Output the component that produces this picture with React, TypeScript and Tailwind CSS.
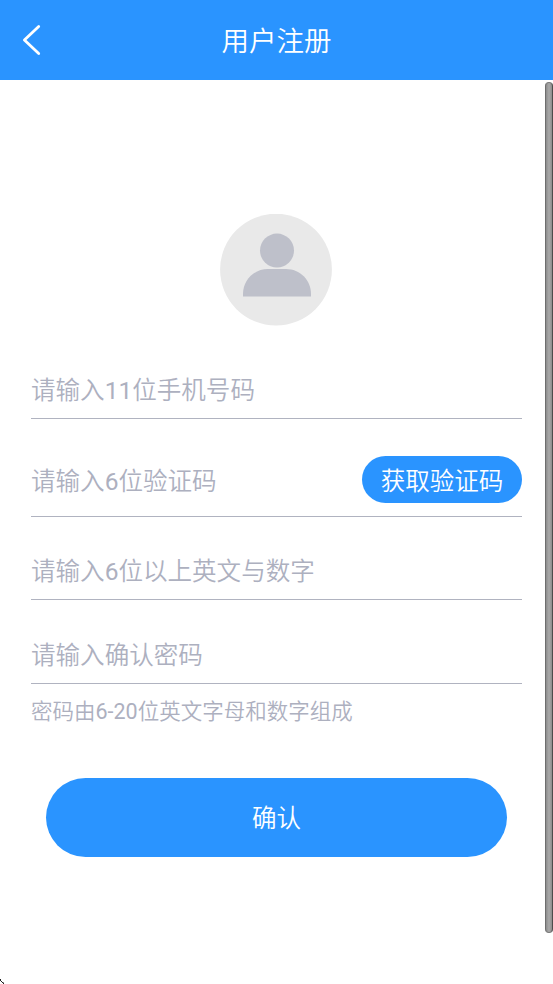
import React from 'react';

const FIELDS = [
  { name: 'phone', type: 'tel', placeholder: '请输入11位手机号码', row: 'h-[59px]', input: 'pt-0.5' },
  { name: 'code', type: 'text', placeholder: '请输入6位验证码', row: 'h-[98px] pb-[13px] pt-[37px]', input: 'pt-[3px]', action: '获取验证码' },
  { name: 'password', type: 'password', placeholder: '请输入6位以上英文与数字', row: 'h-[83px] pt-[26px]', input: 'pt-px' },
  { name: 'confirm', type: 'password', placeholder: '请输入确认密码', row: 'h-[84px] pt-[26px]', input: 'pt-0.5' },
];

const Header: React.FC = () => {
  return (
    <header className="relative flex h-20 items-center justify-center bg-[#2a94ff] text-white">
      <button type="button" aria-label="返回" className="absolute left-[22px] top-6">
        <svg width="20" height="32" viewBox="0 0 20 32" fill="none" stroke="currentColor" strokeWidth="2.8" strokeLinecap="round" strokeLinejoin="round">
          <path d="M16.7 2.4 2.4 16l14.3 13.6" />
        </svg>
      </button>
      <h1 className="pt-1 text-[27.5px] leading-10">用户注册</h1>
    </header>
  );
};

const Avatar: React.FC = () => {
  return (
    <svg className="ml-[189px] block" width="112" height="112" viewBox="0 0 112 112">
      <circle cx="56" cy="55.6" r="55.900" fill="#e9e9e9" />
      <circle cx="57" cy="36.600" r="17" fill="#bec0ca" />
      <path d="M23 82.600V80C23 66 34 55 48 55H66C80 55 91 66 91 80V82.600Z" fill="#bec0ca" />
    </svg>
  );
};

const App: React.FC = () => {
  return (
    <div className="relative h-[984px] w-[553px] overflow-hidden bg-white font-['Roboto','Noto_Sans_CJK_SC_DemiLight','Noto_Sans_CJK_SC',sans-serif]">
      <Header />

      <main className="px-[31px] pt-[133.5px]">
        <Avatar />

        <form className="mt-[34.5px]">
          {FIELDS.map((field) => (
            <div key={field.name} className={`flex items-center border-b border-[#b0b3c0] ${field.row}`}>
              <input
                name={field.name}
                type={field.type}
                placeholder={field.placeholder}
                className={`h-12 min-w-0 flex-1 text-[24.55px] outline-none placeholder:text-[#adb0bf] ${field.input}`}
              />
              {field.action && (
                <button type="button" className="h-[47px] w-40 shrink-0 rounded-full bg-[#2a94ff] pt-[5px] text-[24.5px] leading-none text-white">
                  {field.action}
                </button>
              )}
            </div>
          ))}
          <p className="mt-3 text-[21.5px] leading-8 text-[#adb0bf]">密码由6-20位英文字母和数字组成</p>

          <button type="button" className="mx-[15px] mt-[49.5px] block h-[79.5px] w-[461px] rounded-full bg-[#2a94ff] pt-[5px] text-[24.5px] text-white">
            确认
          </button>
        </form>
      </main>

      {/* scroll thumb */}
      <div className="absolute right-0 top-[82px] h-[851px] w-[8px] rounded-full border border-l-[#6e6e6e] border-r-[#4c4c4c] border-y-[#777] bg-gradient-to-r from-[#8c8c8c] via-[#aaa] to-[#8c8c8c]" />

      {/* resize grip */}
      <svg className="absolute bottom-0 left-0" width="5" height="5" viewBox="0 0 5 5" fill="#222">
        <path d="M0 0h1v2H0zM1 2h1v1H1zM2 3h1v1H2zM3 3.500h1V5H3z" />
      </svg>
    </div>
  );
};

export default App;
